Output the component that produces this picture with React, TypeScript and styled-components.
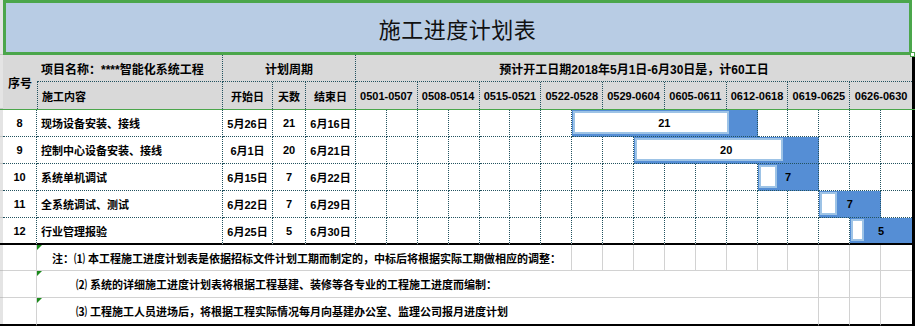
import React from "react";
import styled, { createGlobalStyle } from "styled-components";

const GREEN = "#4ba64b";
const DOT = "#22525f";
const GRID = "#d2d2d2";
const COLS = "3px 34px 186px 50px 33px 50px repeat(18, minmax(0, 1fr)) 3px";

const GlobalStyle = createGlobalStyle`
  html, body { margin: 0; padding: 0; background: #fff; }
  body {
    font-family: "Liberation Sans", "Noto Sans CJK SC", sans-serif;
    color: #000;
  }
  *, *::before, *::after { box-sizing: border-box; }
`;

const Sheet = styled.div`
  width: 915px;
  height: 327px;
  display: flex;
  flex-direction: column;
  overflow: hidden;
  background: #fff;
`;

const Row = styled.div<{ $h: number }>`
  display: grid;
  grid-template-columns: ${COLS};
  grid-template-rows: minmax(0, 1fr);
  height: ${(p) => p.$h}px;
  flex: none;
`;

const HeaderBlock = styled.div`
  display: grid;
  grid-template-columns: ${COLS};
  grid-template-rows: 27px 27px;
  border-bottom: 1px solid ${GREEN};
  background: #d9d9d9;
  flex: none;
`;

const Strip = styled.div<{ $rows?: number; $black?: boolean }>`
  grid-row: span ${(p) => p.$rows ?? 1};
  background: #e4e4e4;
  border-bottom: ${(p) => (p.$black ? "2px solid #000" : "1px solid #c4c4c4")};
`;

const RightEdge = styled.div<{ $rows?: number }>`
  grid-row: span ${(p) => p.$rows ?? 1};
  background: #000;
`;

const Blank = styled.div``;

const TitleBox = styled.div`
  grid-column: 2 / 25;
  position: relative;
  background: #b8cce4;
  border: 3px solid ${GREEN};
  display: flex;
  align-items: center;
  justify-content: center;
  font-family: "Noto Sans CJK SC", sans-serif;
  font-size: 22px;
  font-weight: 400;
  color: #111;
  letter-spacing: 0.5px;
`;

const Handle = styled.span`
  position: absolute;
  right: -6px;
  bottom: -5px;
  width: 5px;
  height: 5px;
  background: #fff;
  border: 1px solid ${GREEN};
`;

const HeadCell = styled.div<{
  $span?: number;
  $rows?: number;
  $start?: boolean;
  $size?: number;
  $r?: boolean;
  $b?: boolean;
  $l?: boolean;
}>`
  grid-column: span ${(p) => p.$span ?? 1};
  grid-row: span ${(p) => p.$rows ?? 1};
  display: flex;
  align-items: center;
  justify-content: ${(p) => (p.$start ? "flex-start" : "center")};
  padding-left: ${(p) => (p.$start ? "4px" : "0")};
  font-size: ${(p) => p.$size ?? 11}px;
  font-weight: 700;
  white-space: nowrap;
  overflow: hidden;
  border-right: ${(p) => (p.$r ? `1px dotted ${DOT}` : "none")};
  border-bottom: ${(p) => (p.$b ? `1px dotted ${DOT}` : "none")};
  border-left: ${(p) => (p.$l ? `1px dotted ${DOT}` : "none")};
`;

const Cell = styled.div<{ $start?: boolean; $last?: boolean }>`
  display: flex;
  align-items: center;
  justify-content: ${(p) => (p.$start ? "flex-start" : "center")};
  padding-left: ${(p) => (p.$start ? "4px" : "0")};
  font-size: 11px;
  font-weight: 700;
  white-space: nowrap;
  overflow: hidden;
  border-right: 1px dotted ${DOT};
  border-bottom: ${(p) => (p.$last ? "2px solid #000" : `1px dotted ${DOT}`)};
`;

const HalfCell = styled.div<{ $col: number; $edge?: boolean; $last?: boolean }>`
  grid-row: 1;
  grid-column: ${(p) => p.$col};
  border-right: ${(p) => (p.$edge ? "none" : `1px dotted ${DOT}`)};
  border-bottom: ${(p) => (p.$last ? "2px solid #000" : `1px dotted ${DOT}`)};
`;

const Bar = styled.div<{ $col: number; $span: number; $edge?: boolean; $last?: boolean }>`
  grid-row: 1;
  grid-column: ${(p) => p.$col} / span ${(p) => p.$span};
  position: relative;
  display: flex;
  align-items: center;
  justify-content: center;
  background: #558ed5;
  border-right: ${(p) => (p.$edge ? "none" : `1px dotted ${DOT}`)};
  border-bottom: ${(p) => (p.$last ? "2px solid #000" : `1px dotted ${DOT}`)};
`;

const BarBox = styled.span<{ $w: number }>`
  position: absolute;
  left: 1px;
  top: 1px;
  bottom: 2px;
  width: ${(p) => p.$w}px;
  background: #fff;
  border: 2px solid #9dc3e6;
`;

const BarLabel = styled.span`
  position: relative;
  font-size: 11px;
  font-weight: 700;
  color: #000;
`;

const PlainCell = styled.div<{ $last?: boolean; $edge?: boolean }>`
  border-right: ${(p) => (p.$edge ? "none" : `1px solid ${GRID}`)};
  border-bottom: ${(p) => (p.$last ? "2px solid #000" : `1px solid ${GRID}`)};
`;

const NoteCell = styled.div<{ $span: number; $indent: number; $last?: boolean }>`
  grid-column: span ${(p) => p.$span};
  position: relative;
  display: flex;
  align-items: center;
  padding-left: ${(p) => p.$indent}px;
  font-size: 11px;
  font-weight: 700;
  white-space: nowrap;
  overflow: hidden;
  border-right: 1px solid ${GRID};
  border-bottom: ${(p) => (p.$last ? "2px solid #000" : `1px solid ${GRID}`)};

  &::before {
    content: "";
    position: absolute;
    left: 0;
    top: 0;
    border-top: 5px solid #1b8a1b;
    border-right: 5px solid transparent;
  }
`;

const weeks = [
  "0501-0507",
  "0508-0514",
  "0515-0521",
  "0522-0528",
  "0529-0604",
  "0605-0611",
  "0612-0618",
  "0619-0625",
  "0626-0630",
];

type Task = {
  no: number;
  name: string;
  start: string;
  days: number;
  end: string;
  from: number;
  span: number;
  box: number;
};

const tasks: Task[] = [
  { no: 8, name: "现场设备安装、接线", start: "5月26日", days: 21, end: "6月16日", from: 7, span: 6, box: 156 },
  { no: 9, name: "控制中心设备安装、接线", start: "6月1日", days: 20, end: "6月21日", from: 9, span: 6, box: 148 },
  { no: 10, name: "系统单机调试", start: "6月15日", days: 7, end: "6月22日", from: 13, span: 2, box: 18 },
  { no: 11, name: "全系统调试、测试", start: "6月22日", days: 7, end: "6月29日", from: 15, span: 2, box: 17 },
  { no: 12, name: "行业管理报验", start: "6月25日", days: 5, end: "6月30日", from: 16, span: 2, box: 13 },
];

const notes = [
  {
    text: "注：⑴ 本工程施工进度计划表是依据招标文件计划工期而制定的，中标后将根据实际工期做相应的调整：",
    span: 11,
    indent: 15,
    blanks: 11,
    h: 26,
  },
  {
    text: "⑵ 系统的详细施工进度计划表将根据工程基建、装修等各专业的工程施工进度而编制：",
    span: 19,
    indent: 39,
    blanks: 3,
    h: 27,
  },
  {
    text: "⑶ 工程施工人员进场后，将根据工程实际情况每月向基建办公室、监理公司报月进度计划",
    span: 19,
    indent: 39,
    blanks: 3,
    h: 28,
  },
];

export default function App() {
  return (
    <>
      <GlobalStyle />
      <Sheet>
        <Row $h={55}>
          <Strip />
          <TitleBox>
            施工进度计划表
            <Handle />
          </TitleBox>
          <Blank />
        </Row>

        <HeaderBlock>
          <Strip $rows={2} />
          <HeadCell $rows={2} $size={12}>
            序号
          </HeadCell>
          <HeadCell $start $size={12} $b $r>
            项目名称：****智能化系统工程
          </HeadCell>
          <HeadCell $span={3} $size={12} $b $r>
            计划周期
          </HeadCell>
          <HeadCell $span={18} $size={12} $b>
            预计开工日期2018年5月1日-6月30日是，计60工日
          </HeadCell>
          <RightEdge $rows={2} />
          <HeadCell $start $l $r>
            施工内容
          </HeadCell>
          <HeadCell $r>开始日</HeadCell>
          <HeadCell $r>天数</HeadCell>
          <HeadCell $r>结束日</HeadCell>
          {weeks.map((w, i) => (
            <HeadCell key={w} $span={2} $r={i < weeks.length - 1}>
              {w}
            </HeadCell>
          ))}
        </HeaderBlock>

        {tasks.map((t, ti) => {
          const last = ti === tasks.length - 1;
          const edge = t.from + t.span >= 18;
          return (
            <Row key={t.no} $h={27}>
              <Strip $black={last} />
              <Cell $last={last}>{t.no}</Cell>
              <Cell $start $last={last}>
                {t.name}
              </Cell>
              <Cell $last={last}>{t.start}</Cell>
              <Cell $last={last}>{t.days}</Cell>
              <Cell $last={last}>{t.end}</Cell>
              {Array.from({ length: 18 }).map((_, i) => (
                <HalfCell key={i} $col={7 + i} $edge={i === 17} $last={last} />
              ))}
              <Bar $col={7 + t.from} $span={t.span} $edge={edge} $last={last}>
                <BarBox $w={t.box} />
                <BarLabel>{t.days}</BarLabel>
              </Bar>
              <RightEdge />
            </Row>
          );
        })}

        {notes.map((n, ni) => {
          const last = ni === notes.length - 1;
          return (
            <Row key={ni} $h={n.h}>
              <Strip $black={last} />
              <PlainCell $last={last} />
              <NoteCell $span={n.span} $indent={n.indent} $last={last}>
                {n.text}
              </NoteCell>
              {Array.from({ length: n.blanks }).map((_, i) => (
                <PlainCell key={i} $last={last} $edge={i === n.blanks - 1} />
              ))}
              <RightEdge />
            </Row>
          );
        })}
      </Sheet>
    </>
  );
}
